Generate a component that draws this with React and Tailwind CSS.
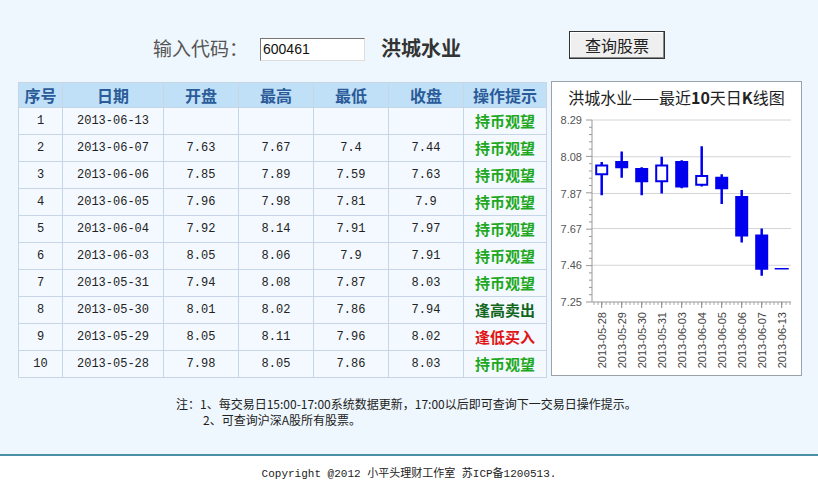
import React from "react";

const rows = [
  ["1", "2013-06-13", "", "", "", "", "持币观望", "hold"],
  ["2", "2013-06-07", "7.63", "7.67", "7.4", "7.44", "持币观望", "hold"],
  ["3", "2013-06-06", "7.85", "7.89", "7.59", "7.63", "持币观望", "hold"],
  ["4", "2013-06-05", "7.96", "7.98", "7.81", "7.9", "持币观望", "hold"],
  ["5", "2013-06-04", "7.92", "8.14", "7.91", "7.97", "持币观望", "hold"],
  ["6", "2013-06-03", "8.05", "8.06", "7.9", "7.91", "持币观望", "hold"],
  ["7", "2013-05-31", "7.94", "8.08", "7.87", "8.03", "持币观望", "hold"],
  ["8", "2013-05-30", "8.01", "8.02", "7.86", "7.94", "逢高卖出", "sell"],
  ["9", "2013-05-29", "8.05", "8.11", "7.96", "8.02", "逢低买入", "buy"],
  ["10", "2013-05-28", "7.98", "8.05", "7.86", "8.03", "持币观望", "hold"],
];

const tipColor = {
  hold: "text-[#1fa81f]",
  sell: "text-[#12661c]",
  buy: "text-[#e01414]",
};

const heads = [
  ["序号", "w-[44px]"],
  ["日期", "w-[101px]"],
  ["开盘", "w-[75px]"],
  ["最高", "w-[75px]"],
  ["最低", "w-[75px]"],
  ["收盘", "w-[75px]"],
  ["操作提示", "w-[83px]"],
];

// oldest first for the chart
const candles = [
  ["2013-05-28", 7.98, 8.05, 7.86, 8.03],
  ["2013-05-29", 8.05, 8.11, 7.96, 8.02],
  ["2013-05-30", 8.01, 8.02, 7.86, 7.94],
  ["2013-05-31", 7.94, 8.08, 7.87, 8.03],
  ["2013-06-03", 8.05, 8.06, 7.9, 7.91],
  ["2013-06-04", 7.92, 8.14, 7.91, 7.97],
  ["2013-06-05", 7.96, 7.98, 7.81, 7.9],
  ["2013-06-06", 7.85, 7.89, 7.59, 7.63],
  ["2013-06-07", 7.63, 7.67, 7.4, 7.44],
  ["2013-06-13", null, null, null, 7.44],
];

const CJK = { fontFamily: '"Noto Sans CJK SC", sans-serif' };
const MONO = { fontFamily: '"Liberation Mono", "Noto Sans CJK SC", monospace' };

const yPix = (v) => 8 + (8.29 - v) * 175;
const xPix = (i) => 49.7 + i * 20;

const KChart = () => {
  const levels = [8.29, 8.08, 7.87, 7.67, 7.46];
  const minor = [];
  for (let k = 0; k <= 25; k++) minor.push(8 + k * 7.28);
  const xMinor = [];
  for (let x = 42; x < 239; x += 4) xMinor.push(x);
  return (
    <svg width="249" height="262" className="block">
      {levels.map((v) => (
        <line key={v} x1="40" x2="239" y1={yPix(v)} y2={yPix(v)} stroke="#d4d4d4" />
      ))}
      {minor.map((y, k) => (
        <line key={k} x1={k % 5 === 0 ? 34 : 37} x2="40" y1={y} y2={y} stroke="#999" />
      ))}
      {xMinor.map((x) => (
        <line key={x} x1={x} x2={x} y1="190" y2="193" stroke="#aaa" />
      ))}
      <line x1="40" x2="40" y1="8" y2="190" stroke="#999" />
      <line x1="40" x2="239" y1="190" y2="190" stroke="#999" />
      {levels.concat([7.25]).map((v) => (
        <text key={v} x="30" y={yPix(v) + 4} textAnchor="end" fontSize="11" fill="#555" fontFamily="Liberation Sans, sans-serif">
          {v.toFixed(2)}
        </text>
      ))}
      {candles.map(([d, o, h, l, c], i) => {
        const x = xPix(i);
        return (
          <g key={d}>
            <line x1={x} x2={x} y1="190" y2="196" stroke="#888" />
            <text
              x={x + 4}
              y="200"
              transform={`rotate(-90 ${x + 4} 200)`}
              textAnchor="end"
              fontSize="11"
              fill="#444"
              fontFamily="Liberation Sans, sans-serif"
            >
              {d}
            </text>
            {o === null ? (
              <line x1={x - 7} x2={x + 7} y1={yPix(c)} y2={yPix(c)} stroke="#0000ee" strokeWidth="1.5" />
            ) : (
              <>
                <line x1={x} x2={x} y1={yPix(h)} y2={yPix(l)} stroke="#0000ee" strokeWidth="2.5" />
                <rect
                  x={x - 5.5}
                  y={yPix(Math.max(o, c))}
                  width="11"
                  height={Math.max(2, Math.abs(o - c) * 175)}
                  fill={c > o ? "#ffffff" : "#0000ee"}
                  stroke="#0000ee"
                  strokeWidth="2"
                />
              </>
            )}
          </g>
        );
      })}
    </svg>
  );
};

export default function App() {
  return (
    <div className="w-[818px] h-[494px] overflow-hidden bg-white" style={CJK}>
      <div className="bg-[#eef7fd] h-[454px] flex flex-col">
        <div className="flex items-start pl-[153px] pt-[31px] h-[81px] shrink-0">
          <div className="w-[107px] mt-[4px] text-[19px] leading-[26px] text-[#555]">输入代码：</div>
          <div className="w-[105px] h-[23px] mt-[7px] bg-white border border-t-[#777] border-l-[#777] border-b-[#ddd] border-r-[#ddd] text-[14px] leading-[18px] px-[2px] text-[#111]">
            <span style={{ fontFamily: '"Liberation Sans", sans-serif' }}>600461</span>
          </div>
          <div className="w-[82px] ml-[16px] mt-[4px] text-[20px] leading-[26px] font-bold text-[#333]">洪城水业</div>
          <button className="ml-[106px] w-[96px] h-[28px] bg-[#efefef] border border-[#333] shadow-[inset_-1px_-1px_0_#888,inset_1px_1px_0_#fff] text-[16px] leading-[24px] text-[#222]">
            查询股票
          </button>
        </div>

        <div className="flex items-start pl-[18px]">
          <table className="border-collapse mt-[1px] border border-[#c6d6e6]">
            <thead>
              <tr className="h-[25px] bg-[#c0e0f7]">
                {heads.map(([t, w]) => (
                  <th key={t} className={`${w} border border-[#c6d6e6] p-0 text-[16px] font-bold text-[#2b5b98] leading-[24px]`}>
                    {t}
                  </th>
                ))}
              </tr>
            </thead>
            <tbody>
              {rows.map((r) => (
                <tr key={r[0]} className="h-[27px] bg-[#f3f9fe]">
                  {r.slice(0, 6).map((c, j) => (
                    <td key={j} className="border border-[#c6d6e6] p-0 text-center text-[12px] text-[#222]" style={MONO}>
                      {c}
                    </td>
                  ))}
                  <td className={`border border-[#c6d6e6] p-0 text-center text-[15px] font-bold ${tipColor[r[7]]}`}>
                    {r[6]}
                  </td>
                </tr>
              ))}
            </tbody>
          </table>

          <div className="ml-[4px] w-[251px] h-[295px] bg-white border border-[#9aa3ab]">
            <div className="h-[30px] text-center text-[16px] leading-[30px] text-[#222]">
              洪城水业——最近<b>10</b>天日<b>K</b>线图
            </div>
            <KChart />
          </div>
        </div>

        <div className="pl-[176px] mt-[18px] text-[12px] leading-[16px] text-[#222]">
          <div>注：1、每交易日15:00-17:00系统数据更新，17:00以后即可查询下一交易日操作提示。</div>
          <div className="pl-[27px]">2、可查询沪深A股所有股票。</div>
        </div>
      </div>
      <div className="h-[2px] bg-[#4a8fa8]" />
      <div className="text-center text-[11px] leading-[14px] mt-[11px] text-[#222]" style={MONO}>
        Copyright @2012 小平头理财工作室 苏ICP备1200513.
      </div>
    </div>
  );
}
